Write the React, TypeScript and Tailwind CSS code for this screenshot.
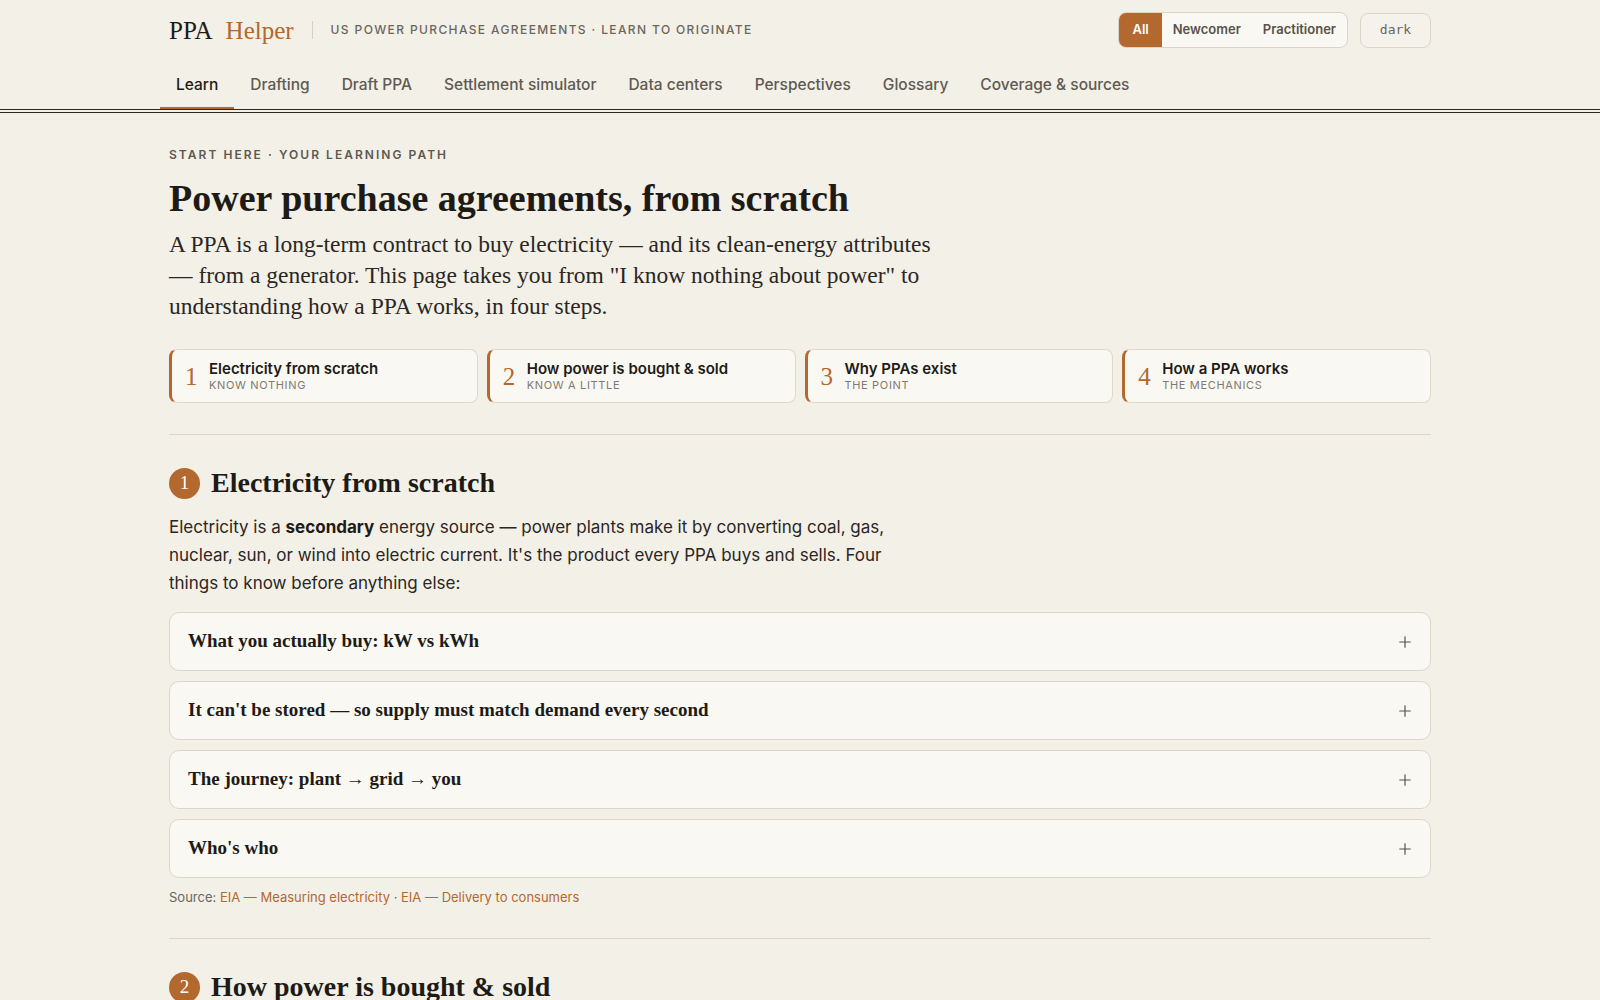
import { Plus } from "lucide-react";

const SANS = "font-['Inter','Noto_Sans',sans-serif]";
const SERIF = "font-['Liberation_Serif','Times_New_Roman',serif]";

const tabs = [
  "Learn",
  "Drafting",
  "Draft PPA",
  "Settlement simulator",
  "Data centers",
  "Perspectives",
  "Glossary",
  "Coverage & sources",
];

const steps = [
  { n: 1, title: "Electricity from scratch", sub: "Know nothing" },
  { n: 2, title: "How power is bought & sold", sub: "Know a little" },
  { n: 3, title: "Why PPAs exist", sub: "The point" },
  { n: 4, title: "How a PPA works", sub: "The mechanics" },
];

const basics = [
  "What you actually buy: kW vs kWh",
  "It can't be stored — so supply must match demand every second",
  "The journey: plant → grid → you",
  "Who's who",
];

function Header() {
  return (
    <header>
      <div className="mx-auto flex h-[60px] max-w-[1310px] items-center justify-between px-6">
        <div className="flex items-center">
          <div className={`${SERIF} flex items-baseline gap-[13px] text-[25px] leading-none`}>
            <span className="text-[#1e1b17]">PPA</span>
            <span className="text-[#b3682e]">Helper</span>
          </div>
          <span className="ml-[18px] mr-[18px] h-[18px] w-px bg-[#d6d0c4]" />
          <span className="text-[12px] font-medium tracking-[0.115em] text-[#6b665d]">
            US POWER PURCHASE AGREEMENTS · LEARN TO ORIGINATE
          </span>
        </div>
        <div className="flex items-center gap-3">
          <div className="flex h-[36px] overflow-hidden rounded-lg border border-[#dcd5c7] bg-[#faf8f2] text-[13px] font-semibold">
            <button className="bg-[#b3682e] px-[13px] text-white">All</button>
            <button className="px-[11px] text-[#57524a]">Newcomer</button>
            <button className="px-[11px] text-[#57524a]">Practitioner</button>
          </div>
          <button className="h-[35px] w-[71px] rounded-lg border border-[#dcd5c7] bg-[#f5f2eb] font-['DejaVu_Sans_Mono',monospace] text-[13px] text-[#6b665d]">
            dark
          </button>
        </div>
      </div>
      <nav className="mx-auto max-w-[1310px] px-6">
        <div className="-ml-[9px] flex h-[49px]">
          {tabs.map((t, i) => (
            <a
              key={t}
              className={`flex items-center border-b-2 px-4 pt-[2px] text-[15.5px] font-medium ${
                i === 0
                  ? "border-[#b3682e] text-[#1e1b17]"
                  : "border-transparent text-[#5f5a52]"
              }`}
            >
              {t}
            </a>
          ))}
        </div>
      </nav>
      <div className="h-[4px] border-y border-[#2b2722]" />
    </header>
  );
}

function StepCard({ n, title, sub }: { n: number; title: string; sub: string }) {
  return (
    <div className="flex h-[54px] items-center gap-[12px] rounded-lg border border-l-[3px] border-[#e0d9cb] border-l-[#b3682e] bg-[#faf8f2] pl-[13px]">
      <span className={`${SERIF} w-[12px] text-[25px] leading-none text-[#b3682e]`}>{n}</span>
      <div className="flex flex-col">
        <span className="text-[15px] font-semibold leading-[18px] text-[#1e1b17]">{title}</span>
        <span className="text-[11px] uppercase leading-[14px] tracking-[0.06em] text-[#807a70]">
          {sub}
        </span>
      </div>
    </div>
  );
}

function AccordionRow({ title }: { title: string }) {
  return (
    <button className="flex h-[59px] w-full items-center justify-between rounded-[10px] border border-[#ddd6c8] bg-[#faf8f2] pl-[18px] pr-[16px] text-left">
      <span className={`${SERIF} text-[19px] font-bold text-[#1e1b17]`}>{title}</span>
      <Plus className="h-[18px] w-[18px] text-[#57524a]" strokeWidth={1.6} />
    </button>
  );
}

function SectionHeading({ n, title }: { n: number; title: string }) {
  return (
    <div className="flex items-center gap-[11px]">
      <span
        className={`${SERIF} flex h-[31px] w-[31px] items-center justify-center rounded-full bg-[#b3682e] text-[19px] text-white`}
      >
        {n}
      </span>
      <h2 className={`${SERIF} text-[28px] font-bold leading-[36px] text-[#1e1b17]`}>{title}</h2>
    </div>
  );
}

export default function App() {
  return (
    <div className={`${SANS} min-h-screen bg-[#f3f0e8] text-[#1e1b17]`}>
      <Header />
      <main className="mx-auto max-w-[1310px] px-6 pt-[34px]">
        <p className="text-[12px] font-semibold leading-4 tracking-[0.17em] text-[#5d5850]">
          START HERE · YOUR LEARNING PATH
        </p>
        <h1 className={`${SERIF} mt-[13px] text-[38px] font-bold leading-[44px]`}>
          Power purchase agreements, from scratch
        </h1>
        <p className={`${SERIF} mt-[9px] max-w-[775px] text-[23.5px] leading-[31px] text-[#2a2622]`}>
          A PPA is a long-term contract to buy electricity — and its clean-energy attributes — from
          a generator. This page takes you from "I know nothing about power" to understanding how a
          PPA works, in four steps.
        </p>

        <div className="mt-[27px] grid grid-cols-4 gap-[9px]">
          {steps.map((s) => (
            <StepCard key={s.n} {...s} />
          ))}
        </div>

        <div className="mt-[31px] border-t border-[#dcd6ca]" />

        <section className="pt-[30px]">
          <SectionHeading n={1} title="Electricity from scratch" />
          <p className="mt-[12px] max-w-[730px] text-[17px] leading-[28px] text-[#2a2622]">
            Electricity is a <strong className="font-bold text-[#1e1b17]">secondary</strong> energy
            source — power plants make it by converting coal, gas, nuclear, sun, or wind into
            electric current. It's the product every PPA buys and sells. Four things to know before
            anything else:
          </p>
          <div className="mt-[15px] flex flex-col gap-[10px]">
            {basics.map((b) => (
              <AccordionRow key={b} title={b} />
            ))}
          </div>
          <p className="mt-[10px] text-[13px] leading-[18px] text-[#6b665d]">
            Source: <a className="text-[#b3682e]">EIA — Measuring electricity</a> ·{" "}
            <a className="text-[#b3682e]">EIA — Delivery to consumers</a>
          </p>
        </section>

        <div className="mt-[32px] border-t border-[#dcd6ca]" />

        <section className="pt-[30px] pb-16">
          <SectionHeading n={2} title="How power is bought & sold" />
        </section>
      </main>
    </div>
  );
}
